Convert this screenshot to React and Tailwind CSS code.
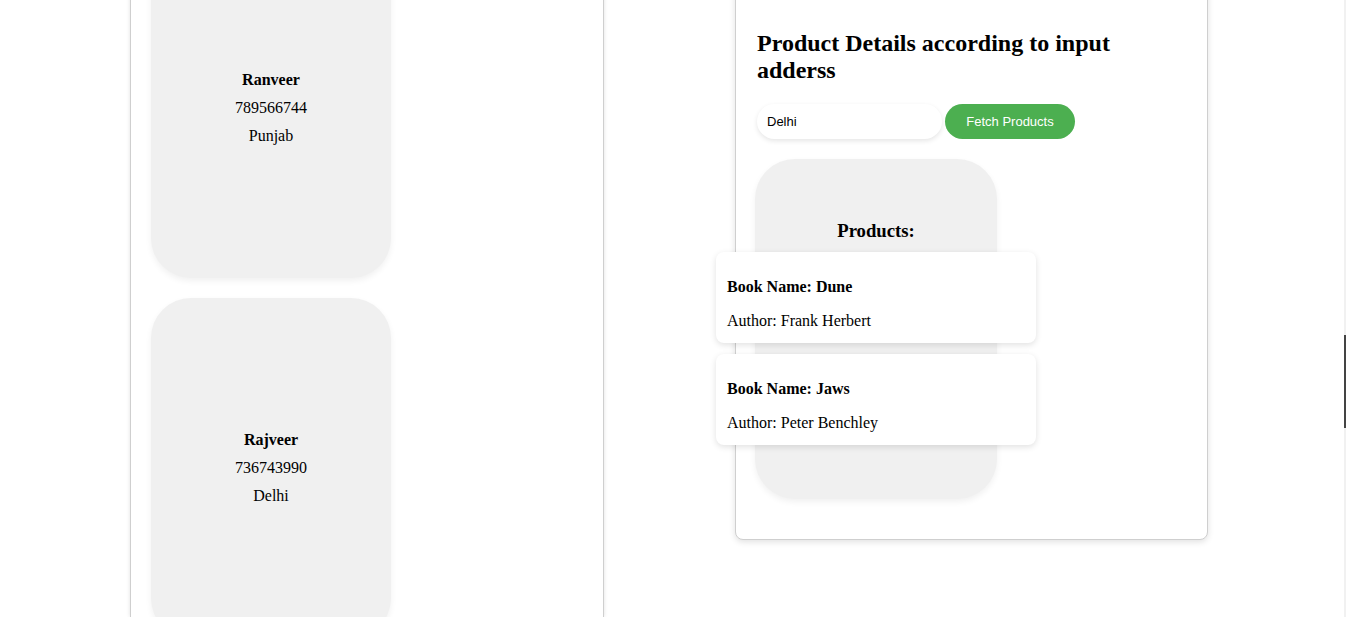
import React, { useState } from 'react';

const users = [
    { name: "Ranveer", phone: "789566744", city: "Punjab" },
    { name: "Rajveer", phone: "736743990", city: "Delhi" },
];

const books = [
    { name: "Dune", author: "Frank Herbert" },
    { name: "Jaws", author: "Peter Benchley" },
];

const serif = { fontFamily: '"Liberation Serif", "Times New Roman", serif' };
const sans = { fontFamily: '"Liberation Sans", Arial, sans-serif' };

const App = () => {
    const [address, setAddress] = useState("Delhi");

    return (
        <div className="relative flex h-[617px] overflow-hidden bg-white text-black" style={serif}>
            {/* Left Side: User cards */}
            <div className="ml-[130px] w-[474px] shrink-0 -mt-[82px] flex flex-col items-start gap-5 p-5 border-x border-[#cfcfcf] shadow-[0_0_4px_rgba(0,0,0,0.12)]">
                {users.map(u => (
                    <div
                        key={u.phone}
                        className="w-[240px] h-[340px] shrink-0 rounded-[40px] bg-[#f0f0f0] shadow-[0_3px_6px_rgba(0,0,0,0.06)] flex flex-col justify-center items-center gap-[10px] text-base leading-[18px]"
                    >
                        <p className="font-bold">{u.name}</p>
                        <p>{u.phone}</p>
                        <p>{u.city}</p>
                    </div>
                ))}
            </div>

            {/* Right Side: Product search */}
            <div className="ml-[131px] w-[473px] shrink-0 self-start -mt-[12px] pl-[21px] pr-5 pt-[21px] pb-10 bg-white border border-[#cfcfcf] rounded-b-lg shadow-[0_2px_6px_rgba(0,0,0,0.12)]">
                <h2 className="text-2xl font-bold leading-[27px] mt-5 mb-5">Product Details according to input adderss</h2>

                <div className="flex items-center gap-[3px] mb-5">
                    <input
                        value={address}
                        onChange={(e) => setAddress(e.target.value)}
                        className="w-[185px] h-[35px] px-[10px] rounded-full bg-white text-[13px] text-black outline-none shadow-[0_2px_5px_rgba(0,0,0,0.1)]"
                        style={sans}
                    />
                    <button className="w-[130px] h-[35px] rounded-full bg-[#4caf50] text-white text-[13px]" style={sans}>
                        Fetch Products
                    </button>
                </div>

                <div className="-ml-[2px] w-[242px] h-[340px] rounded-[40px] bg-[#f0f0f0] shadow-[0_3px_6px_rgba(0,0,0,0.06)] flex flex-col justify-center items-center pt-[6px]">
                    <h3 className="text-[18.72px] font-bold leading-[21px] mb-[11px]">Products:</h3>
                    <div className="flex flex-col gap-[11px]">
                        {books.map(b => (
                            <div key={b.name} className="w-[320px] rounded-lg bg-white px-[11px] pt-[26px] pb-[13px] shadow-[0_2px_6px_rgba(0,0,0,0.12)] text-base leading-[18px]">
                                <p className="font-bold">Book Name: {b.name}</p>
                                <p className="mt-4">Author: {b.author}</p>
                            </div>
                        ))}
                    </div>
                </div>
            </div>

            {/* scrollbar */}
            <div className="absolute right-0 top-0 h-full w-[2px] bg-[#f1f1f1]">
                <div className="mt-[335px] h-[93px] w-[2px] bg-[#444]"></div>
            </div>
        </div>
    );
};

export default App;
